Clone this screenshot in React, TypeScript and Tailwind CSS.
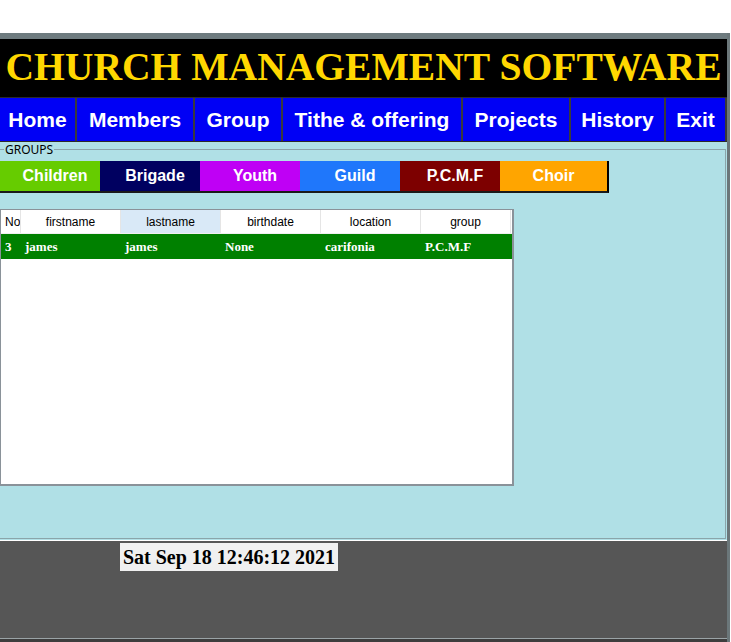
const navItems = [
  { label: "Home", w: "w-[77px]" },
  { label: "Members", w: "w-[118px]" },
  { label: "Group", w: "w-[88px]" },
  { label: "Tithe & offering", w: "w-[180px]" },
  { label: "Projects", w: "w-[108px]" },
  { label: "History", w: "w-[95px]" },
  { label: "Exit", w: "w-[61px]" },
];

const groups = [
  { label: "Children", cls: "w-[100px] bg-[#66cc00] pl-[10px]" },
  { label: "Brigade", cls: "w-[100px] bg-[#000060] pl-[10px]" },
  { label: "Youth", cls: "w-[100px] bg-[#bf00f5] pl-[10px]" },
  { label: "Guild", cls: "w-[100px] bg-[#1f77fb] pl-[10px]" },
  { label: "P.C.M.F", cls: "w-[100px] bg-[#7d0000] pl-[10px]" },
  { label: "Choir", cls: "w-[109px] bg-[#ffa500] border-r-2 border-black" },
];

const columns = [
  { label: "No", w: "w-[20px]", active: false },
  { label: "firstname", w: "w-[100px]", active: false },
  { label: "lastname", w: "w-[100px]", active: true },
  { label: "birthdate", w: "w-[100px]", active: false },
  { label: "location", w: "w-[100px]", active: false },
  { label: "group", w: "w-[90px]", active: false },
];

const rows = [["3", "james", "james", "None", "carifonia", "P.C.M.F"]];

export default function App() {
  return (
    <div className="w-[731px] h-[642px] bg-white overflow-hidden font-['Liberation_Sans',Arial,sans-serif]">
      <div className="h-[33px]" />
      <div className="w-[730px] h-[609px] flex flex-col border-r-[3px] border-[#6b777a]">
        {/* title bar */}
        <div className="h-[6px] bg-[#6e7b7f]" />
        <div className="h-[58px] bg-black flex items-center justify-center">
          <h1 className="text-[39.6px] leading-none font-bold text-[#ffd700] font-['Liberation_Serif','Times_New_Roman',serif] whitespace-nowrap">
            CHURCH MANAGEMENT SOFTWARE
          </h1>
        </div>

        {/* nav */}
        <nav className="flex h-[45px] border-y border-[#2b2b2b] bg-[#2b2b2b]">
          {navItems.map((n) => (
            <div
              key={n.label}
              className={`${n.w} h-full bg-[#0000f5] border-r-2 border-[#3a3a3a] flex items-center justify-center text-white font-bold text-[21px] whitespace-nowrap`}
            >
              {n.label}
            </div>
          ))}
        </nav>

        {/* main panel */}
        <div className="h-[399px] bg-[#b0e0e6] pt-[1px] border-b border-white">
          <fieldset className="h-[396px] border border-l-0 border-[#8aa5aa] mr-[1px]">
            <legend className="ml-[4px] px-[1px] text-[12px] leading-[13px] text-black font-['Noto_Sans',sans-serif]">
              GROUPS
            </legend>
            <div className="flex mt-[5px] h-[32px]">
              {groups.map((g) => (
                <div
                  key={g.label}
                  className={`${g.cls} h-full border-b-2 border-b-[#1a1a1a] flex items-center justify-center text-white font-bold text-[16px]`}
                >
                  {g.label}
                </div>
              ))}
            </div>

            {/* table */}
            <div className="mt-[16px] w-[514px] h-[277px] bg-white border-t border-l border-[#8a9299] border-r-2 border-b-2">
              <div className="flex h-[24px] border-b border-[#f0f0f0]">
                {columns.map((c, j) => (
                  <div
                    key={c.label}
                    className={`${c.w} h-full overflow-hidden whitespace-nowrap flex items-center border-r border-[#e5e5e5] text-[12px] text-black ${j === 0 ? "justify-start pl-[4px]" : "justify-center"} ${c.active ? "bg-[#d9e9f7]" : "bg-white"}`}
                  >
                    {c.label}
                  </div>
                ))}
              </div>
              {rows.map((r, i) => (
                <div key={i} className="flex h-[25px] bg-[#008000] items-center">
                  {r.map((cell, j) => (
                    <div
                      key={j}
                      className={`${columns[j].w} pl-[4px] text-white font-bold text-[13px] font-['Liberation_Serif','Times_New_Roman',serif] whitespace-nowrap overflow-hidden`}
                    >
                      {cell}
                    </div>
                  ))}
                </div>
              ))}
            </div>
          </fieldset>
        </div>

        {/* footer */}
        <div className="flex-1 bg-[#565656] pt-[2px] pl-[120px] border-b border-[#9aa3a6]">
          <div className="w-[218px] h-[28px] bg-[#f0f0f0] flex items-center justify-center text-[20px] font-bold text-black font-['Liberation_Serif','Times_New_Roman',serif] whitespace-nowrap">
            Sat Sep 18 12:46:12 2021
          </div>
        </div>
        <div className="h-[3px] bg-[#3d3d3d]" />
      </div>
    </div>
  );
}
